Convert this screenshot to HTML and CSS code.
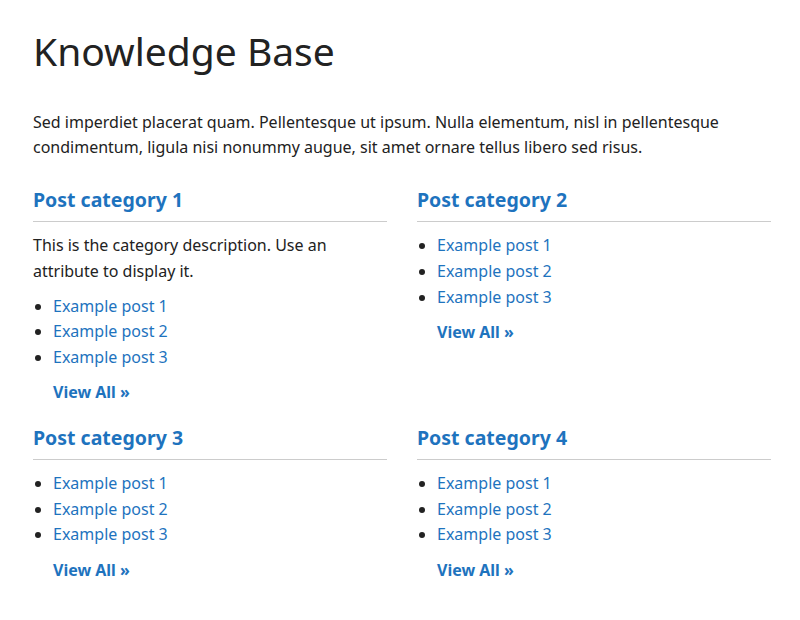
FILE: index.html
```html
<!DOCTYPE html>
<html lang="en">
<head>
<meta charset="utf-8">
<title>Knowledge Base</title>
<link rel="stylesheet" href="styles.css">
</head>
<body>
<main class="kb">
  <h1 class="kb-title">Knowledge Base</h1>
  <p class="kb-intro">Sed imperdiet placerat quam. Pellentesque ut ipsum. Nulla elementum, nisl in pellentesque condimentum, ligula nisi nonummy augue, sit amet ornare tellus libero sed risus.</p>
  <div class="kb-grid">
    <section class="cat">
      <h2 class="cat-title"><a href="#">Post category 1</a></h2>
      <p class="cat-desc">This is the category description. Use an attribute to display it.</p>
      <ul class="cat-posts">
        <li><a href="#">Example post 1</a></li>
        <li><a href="#">Example post 2</a></li>
        <li><a href="#">Example post 3</a></li>
      </ul>
      <a class="cat-more" href="#">View All &raquo;</a>
    </section>
    <section class="cat">
      <h2 class="cat-title"><a href="#">Post category 2</a></h2>
      <ul class="cat-posts">
        <li><a href="#">Example post 1</a></li>
        <li><a href="#">Example post 2</a></li>
        <li><a href="#">Example post 3</a></li>
      </ul>
      <a class="cat-more" href="#">View All &raquo;</a>
    </section>
    <section class="cat">
      <h2 class="cat-title"><a href="#">Post category 3</a></h2>
      <ul class="cat-posts">
        <li><a href="#">Example post 1</a></li>
        <li><a href="#">Example post 2</a></li>
        <li><a href="#">Example post 3</a></li>
      </ul>
      <a class="cat-more" href="#">View All &raquo;</a>
    </section>
    <section class="cat">
      <h2 class="cat-title"><a href="#">Post category 4</a></h2>
      <ul class="cat-posts">
        <li><a href="#">Example post 1</a></li>
        <li><a href="#">Example post 2</a></li>
        <li><a href="#">Example post 3</a></li>
      </ul>
      <a class="cat-more" href="#">View All &raquo;</a>
    </section>
  </div>
</main>
</body>
</html>
```
FILE: styles.css
```css
* { box-sizing: border-box; }

body {
  margin: 0;
  background: #fff;
  color: #222;
  font-family: "Noto Sans", "Open Sans", sans-serif;
  font-size: 16px;
  line-height: 1.6;
}

a { color: #1e73be; text-decoration: none; }

.kb {
  padding: 28px 29px 30px 33px;
}

.kb-title {
  margin: 0 0 35px;
  font-size: 39px;
  font-weight: 400;
  line-height: 1.2;
  color: #222;
}

.kb-intro {
  margin: 0 0 26px;
}

.kb-grid {
  display: grid;
  grid-template-columns: 1fr 1fr;
  column-gap: 30px;
  row-gap: 19px;
}

.cat-title {
  margin: 0 0 11px;
  padding-bottom: 9px;
  border-bottom: 1px solid #ccc;
  font-size: 19.5px;
  font-weight: 700;
  line-height: 1.3;
}

.cat-desc {
  margin: 0 0 9px;
}

.cat-posts {
  margin: 0 0 10px;
  padding-left: 20px;
  line-height: 25.6px;
}

.cat-more {
  display: inline-block;
  margin-left: 20px;
  font-weight: 700;
}
```
